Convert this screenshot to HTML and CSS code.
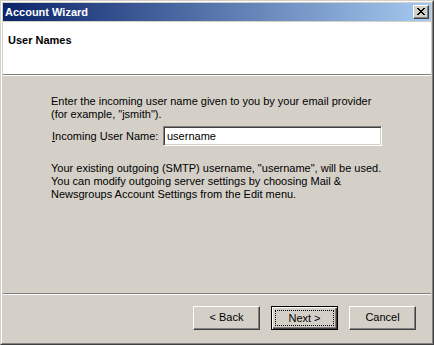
FILE: index.html
```html
<!DOCTYPE html>
<html>
<head>
<meta charset="utf-8">
<link rel="stylesheet" href="styles.css">
</head>
<body>
<div class="window">
  <div class="frame">
    <div class="titlebar">
      <span class="title">Account Wizard</span>
      <span class="close"><svg width="8" height="7" viewBox="0 0 8 7"><path d="M0 0h2v1h1v1h2V1h1V0h2v1H7v1H6v1H5v1h1v1h1v1h1v1H6V6H5V5H3v1H2v1H0V6h1V5h1V4h1V3H2V2H1V1H0z" fill="#000"/></svg></span>
    </div>
    <div class="header"><h1 class="heading">User Names</h1></div>
    <div class="body">
      <p class="para">Enter the incoming user name given to you by your email provider<br>(for example, "jsmith").</p>
      <div class="field">
        <label class="label"><span class="accel">I</span>ncoming User Name:</label>
        <div class="input">username</div>
      </div>
      <p class="para para2">Your existing outgoing (SMTP) username, "username", will be used.<br>You can modify outgoing server settings by choosing Mail &amp;<br>Newsgroups Account Settings from the Edit menu.</p>
    </div>
    <div class="footer">
      <div class="btn">&lt; Back</div>
      <div class="btn default"><span class="focus">Next &gt;</span></div>
      <div class="btn">Cancel</div>
    </div>
  </div>
</div>
</body>
</html>
```
FILE: styles.css
```css
* { box-sizing: border-box; }
html, body { margin: 0; padding: 0; }
body {
  font-family: "Liberation Sans", Arial, sans-serif;
  font-size: 11px;
  line-height: 13px;
  color: #000;
  background: #d4d0c8;
}
.window {
  width: 434px;
  height: 345px;
  border: 1px solid;
  border-color: #d4d0c8 #404040 #404040 #d4d0c8;
}
.frame {
  height: 100%;
  border: 1px solid;
  border-color: #fff #808080 #808080 #fff;
  padding: 1px;
  background: #d4d0c8;
  display: flex;
  flex-direction: column;
}
.titlebar {
  height: 18px;
  flex: none;
  margin-bottom: 1px;
  background: linear-gradient(to right, #0a246a, #a6caf0);
  display: flex;
  align-items: center;
  justify-content: space-between;
  padding: 0 2px 0 2px;
}
.title {
  color: #fff;
  font-weight: bold;
  font-size: 11px;
}
.close {
  width: 16px;
  height: 14px;
  background: #d4d0c8;
  border: 1px solid;
  border-color: #fff #404040 #404040 #fff;
  box-shadow: inset -1px -1px #808080;
  display: flex;
  align-items: center;
  justify-content: center;
  padding-bottom: 1px;
}
.close svg { display: block; }
.header {
  height: 53px;
  flex: none;
  background: #fff;
  border-bottom: 1px solid #808080;
  padding: 12px 5px 0;
}
.heading {
  margin: 0;
  font-size: 11px;
  font-weight: bold;
  line-height: 13px;
}
.body {
  flex: 1;
  border-top: 1px solid #fff;
  border-bottom: 1px solid #808080;
  padding: 19px 0 0 48px;
}
.para { margin: 0; }
.para2 { margin-top: 16px; }
.field {
  display: flex;
  align-items: center;
  margin-top: 5px;
}
.label {
  width: 112px;
  padding-left: 1px;
}
.accel { text-decoration: underline; }
.input {
  width: 219px;
  height: 20px;
  background: #fff;
  border: 1px solid;
  border-color: #808080 #fff #fff #808080;
  box-shadow: inset 1px 1px #404040, inset -1px -1px #d4d0c8;
  padding: 2px 3px;
  line-height: 14px;
}
.footer {
  height: 48px;
  flex: none;
  border-top: 1px solid #fff;
  display: flex;
  justify-content: flex-end;
  align-items: flex-start;
  gap: 11px;
  padding: 11px 15px 0 0;
}
.btn {
  width: 67px;
  height: 24px;
  border: 1px solid;
  border-color: #fff #404040 #404040 #fff;
  box-shadow: inset -1px -1px #808080, inset 1px 1px #d4d0c8;
  display: flex;
  align-items: center;
  justify-content: center;
  padding-bottom: 1px;
}
.btn.default {
  border: 1px solid #000;
  box-shadow: inset 1px 1px #fff, inset -1px -1px #404040, inset -2px -2px #808080;
  padding: 3px;
}
.focus {
  width: 100%;
  height: 100%;
  border: 1px dotted #000;
  display: flex;
  align-items: center;
  justify-content: center;
}
```
